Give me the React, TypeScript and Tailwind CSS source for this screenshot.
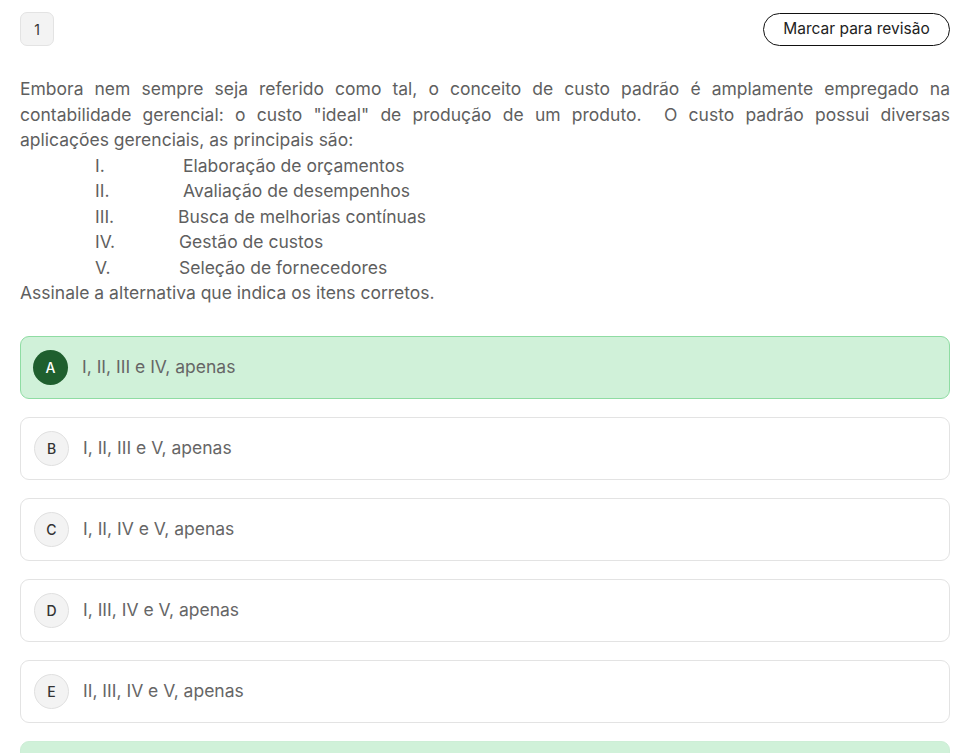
import React from "react";

const items: { n: string; t: string; pad: string }[] = [
  { n: "I.", t: "Elaboração de orçamentos", pad: "pl-[5px]" },
  { n: "II.", t: "Avaliação de desempenhos", pad: "pl-[5px]" },
  { n: "III.", t: "Busca de melhorias contínuas", pad: "pl-0" },
  { n: "IV.", t: "Gestão de custos", pad: "pl-[1px]" },
  { n: "V.", t: "Seleção de fornecedores", pad: "pl-[1px]" },
];

const options = [
  { l: "A", t: "I, II, III e IV, apenas", sel: true },
  { l: "B", t: "I, II, III e V, apenas", sel: false },
  { l: "C", t: "I, II, IV e V, apenas", sel: false },
  { l: "D", t: "I, III, IV e V, apenas", sel: false },
  { l: "E", t: "II, III, IV e V, apenas", sel: false },
];

export default function App() {
  return (
    <div
      className="w-[965px] h-[753px] overflow-hidden bg-white pl-[20px] pr-[15px] pt-[12px]"
      style={{ fontFamily: "Inter, 'Noto Sans', sans-serif" }}
    >
      <div className="flex items-center justify-between">
        <div className="w-[34px] h-[34px] rounded-[7px] bg-[#f3f3f3] border border-[#e3e3e3] flex items-center justify-center text-[14px] text-[#333]">
          1
        </div>
        <button className="h-[33px] w-[187px] rounded-full border-[1.5px] border-[#111] text-[15.5px] text-[#222] flex items-center justify-center">
          Marcar para revisão
        </button>
      </div>

      <div className="mt-[30px] text-[17.5px] leading-[25.5px] text-[#5f5f5f]">
        <p className="text-justify [text-align-last:justify]">
          Embora nem sempre seja referido como tal, o conceito de custo padrão é amplamente empregado na
        </p>
        <p className="text-justify [text-align-last:justify]">
          contabilidade gerencial: o custo "ideal" de produção de um produto.&nbsp; O custo padrão possui diversas
        </p>
        <p>aplicações gerenciais, as principais são:</p>
        {items.map((it) => (
          <div key={it.n} className="flex pl-[75px]">
            <span className="w-[83px]">{it.n}</span>
            <span className={it.pad}>{it.t}</span>
          </div>
        ))}
        <p>Assinale a alternativa que indica os itens corretos.</p>
      </div>

      <div className="mt-[30px] flex flex-col gap-[18px]">
        {options.map((o) => (
          <div
            key={o.l}
            className={
              o.sel
                ? "h-[63px] shrink-0 rounded-[9px] border-[1.5px] border-[#8fdca3] bg-[#d0f1d9] flex items-center pl-[12px]"
                : "h-[63px] shrink-0 rounded-[9px] border border-[#e3e3e3] bg-white flex items-center pl-[13px]"
            }
          >
            <div
              className={
                o.sel
                  ? "w-[35px] h-[35px] rounded-full bg-[#1f5f2e] text-white flex items-center justify-center text-[14px] font-medium"
                  : "w-[35px] h-[35px] rounded-full bg-[#f3f3f3] border border-[#e0e0e0] text-[#333] flex items-center justify-center text-[14px] font-medium"
              }
            >
              {o.l}
            </div>
            <span className="ml-[14px] text-[17.5px] text-[#666]">{o.t}</span>
          </div>
        ))}
        <div className="h-[80px] rounded-[9px] border border-[#cdeed6] bg-[#d0f1d9] shrink-0" />
      </div>
    </div>
  );
}
